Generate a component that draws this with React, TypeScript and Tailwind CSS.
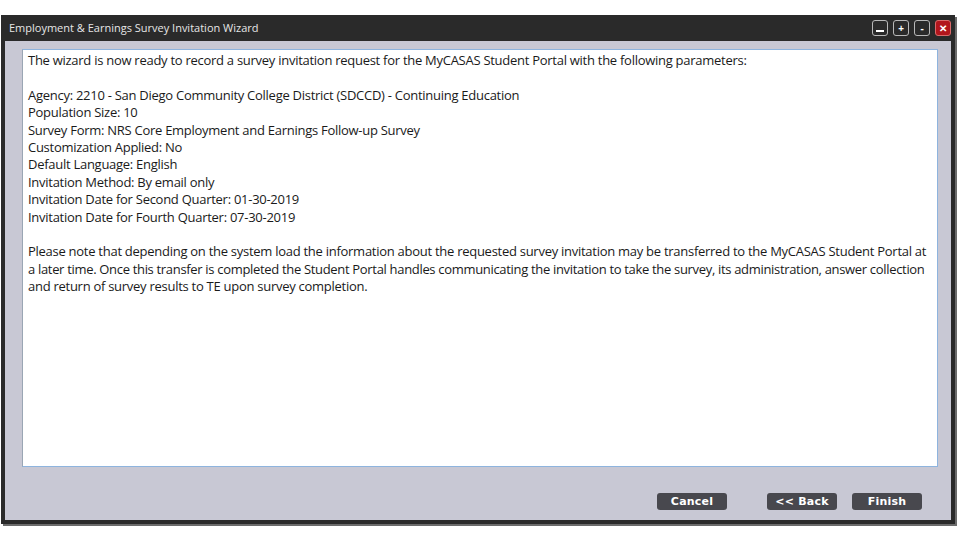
import React from "react";

const lines = [
  "Agency: 2210 - San Diego Community College District (SDCCD) - Continuing Education",
  "Population Size: 10",
  "Survey Form: NRS Core Employment and Earnings Follow-up Survey",
  "Customization Applied: No",
  "Default Language: English",
  "Invitation Method: By email only",
  "Invitation Date for Second Quarter: 01-30-2019",
  "Invitation Date for Fourth Quarter: 07-30-2019",
];

const TitleButton = ({ children, close }: { children: React.ReactNode; close?: boolean }) => (
  <div
    className={`w-4 h-4 rounded-[3px] border flex items-center justify-center text-[10px] leading-none font-bold text-white ${
      close ? "bg-[#b2161c] border-[#d86a6a]" : "bg-[#2a2a2a] border-[#b8b8b8]"
    }`}
  >
    {children}
  </div>
);

const WizardButton = ({ label }: { label: string }) => (
  <button className="w-[70px] h-[17px] rounded-[3px] bg-[#48484e] text-white text-[11px] font-bold leading-none flex items-center justify-center tracking-[0.2px] font-['DejaVu_Sans',sans-serif]">
    {label}
  </button>
);

export default function App() {
  return (
    <div className="w-[960px] h-[540px] bg-white pt-[15px] pl-[1px] font-['Open_Sans',sans-serif]">
      <div className="w-[954px] h-[509px] flex flex-col bg-[#2a2a2a] shadow-[2px_2px_0_#6b6b6b] px-[4px] pb-[4px]">
        {/* Title bar */}
        <div className="h-[26px] flex items-center justify-between pl-[4px]">
          <span className="text-[11px] text-[#e6e6e6]">
            Employment &amp; Earnings Survey Invitation Wizard
          </span>
          <div className="flex gap-[5px] items-center">
            <TitleButton>
              <span className="block w-[8px] h-[2px] bg-white mt-[6px]" />
            </TitleButton>
            <TitleButton>+</TitleButton>
            <TitleButton>-</TitleButton>
            <TitleButton close>✕</TitleButton>
          </div>
        </div>

        {/* Body */}
        <div className="flex-1 bg-[#c8c8d4] flex flex-col pt-[8px] pl-[17px] pr-[13px]">
          <div className="h-[418px] bg-white border border-[#8eb4de] border-l-[#9aa6b4] px-[5px] pt-[2px] text-[13px] leading-[17.4px] text-[#1a1a1a] tracking-[-0.27px] whitespace-nowrap overflow-hidden">
            <p>The wizard is now ready to record a survey invitation request for the MyCASAS Student Portal with the following parameters:</p>
            <p>&nbsp;</p>
            {lines.map((l) => (
              <p key={l}>{l}</p>
            ))}
            <p>&nbsp;</p>
            <p>Please note that depending on the system load the information about the requested survey invitation may be transferred to the MyCASAS Student Portal at</p>
            <p className="tracking-[-0.32px]">a later time. Once this transfer is completed the Student Portal handles communicating the invitation to take the survey, its administration, answer collection</p>
            <p>and return of survey results to TE upon survey completion.</p>
          </div>
          <div className="flex justify-end items-center mt-[26px] pr-[16px]">
            <WizardButton label="Cancel" />
            <div className="w-[40px]" />
            <WizardButton label="<< Back" />
            <div className="w-[15px]" />
            <WizardButton label="Finish" />
          </div>
        </div>
      </div>
    </div>
  );
}
